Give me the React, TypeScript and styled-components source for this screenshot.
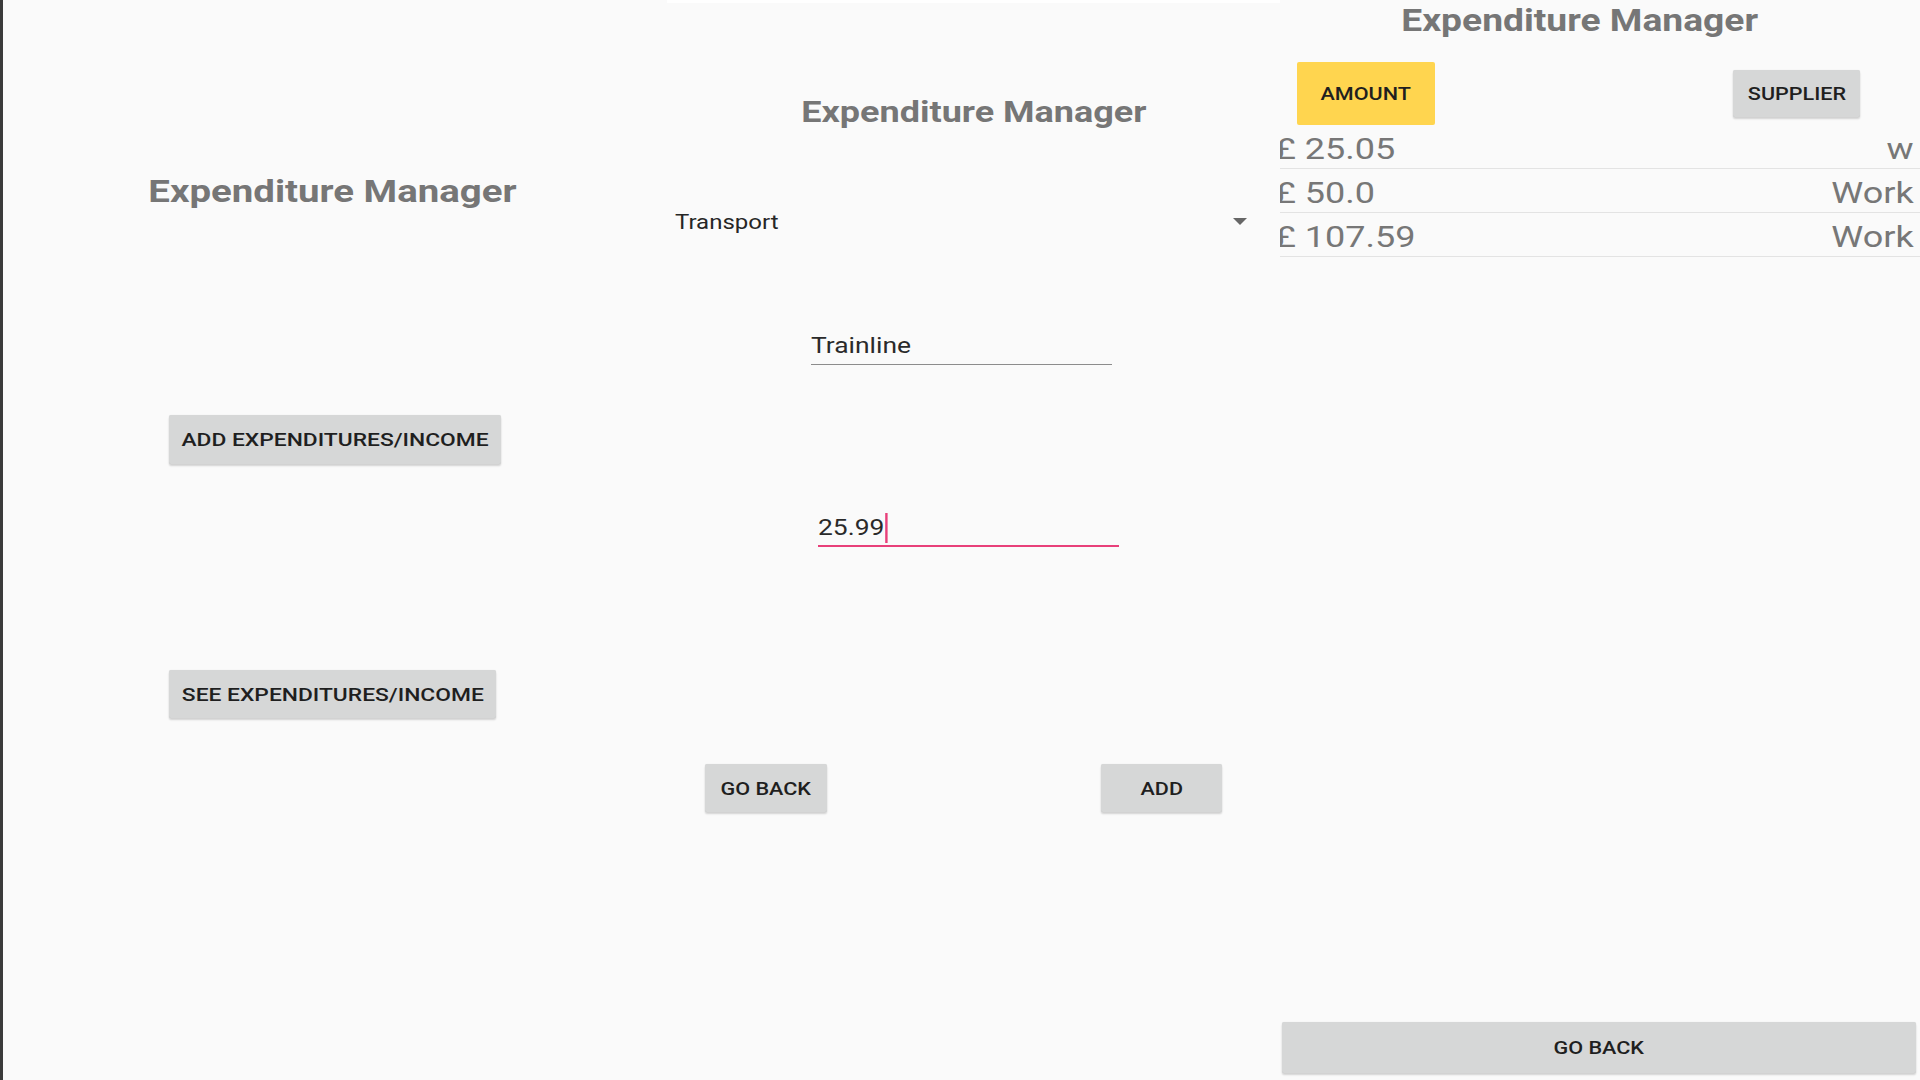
import React from "react";
import styled, { createGlobalStyle } from "styled-components";

const Global = createGlobalStyle`
  html, body { margin: 0; padding: 0; background: #fafafa; }
  body { font-family: Roboto, "Noto Sans", Arial, sans-serif; }
  * { box-sizing: border-box; }
`;

const Screen = styled.div`
  width: 1920px;
  height: 1080px;
  display: flex;
  background: #fafafa;
  border-left: 3px solid #3b3b3b;
  overflow: hidden;
`;

const Wide = styled.span<{ $o?: string; $s?: number }>`
  display: inline-block;
  white-space: nowrap;
  transform: scaleX(${(p) => p.$s ?? 1.2});
  transform-origin: ${(p) => p.$o ?? "center"};
`;

const Title = styled.h1<{ $size: number; $shift?: number }>`
  margin: 0;
  height: 40px;
  line-height: 40px;
  font-size: ${(p) => p.$size}px;
  font-weight: 700;
  color: #767676;
  text-align: center;
  padding-right: ${(p) => p.$shift ?? 0}px;
`;

const RaisedButton = styled.button<{ $w?: number; $h?: number; $accent?: boolean; $fs?: number }>`
  flex: none;
  width: ${(p) => (p.$w ? `${p.$w}px` : "auto")};
  height: ${(p) => p.$h ?? 48}px;
  padding: 0;
  border: none;
  border-radius: 2px;
  background: ${(p) => (p.$accent ? "#ffd54f" : "#d6d7d7")};
  box-shadow: ${(p) =>
    p.$accent ? "none" : "0 2px 2px rgba(0,0,0,0.16), 0 0 1px rgba(0,0,0,0.14)"};
  display: flex;
  align-items: center;
  justify-content: center;
  font-family: Roboto, Arial, sans-serif;
  font-weight: 500;
  font-size: ${(p) => p.$fs ?? 18}px;
  color: #1f1f1f;
  cursor: pointer;
`;

/* ---------- left panel ---------- */
const LeftPanel = styled.section`
  width: 664px;
  flex: none;
  display: flex;
  flex-direction: column;
  align-items: flex-start;
  padding-top: 171px;
`;

const LeftTitleWrap = styled.div`
  align-self: stretch;
  padding-right: 6px;
`;

const MenuButton = styled(RaisedButton)<{ $top: number }>`
  margin-left: 166px;
  margin-top: ${(p) => p.$top}px;
`;

/* ---------- middle panel ---------- */
const MiddlePanel = styled.section`
  width: 613px;
  flex: none;
  display: flex;
  flex-direction: column;
  align-items: flex-start;
  border-top: 3px solid #ffffff;
`;

const MiddleTitleWrap = styled.div`
  align-self: stretch;
  margin-top: 89px;
`;

const Spinner = styled.div`
  margin-top: 70px;
  margin-left: 8px;
  width: 572px;
  height: 40px;
  display: flex;
  align-items: center;
  justify-content: space-between;
  font-size: 20px;
  color: #262626;
`;

const Field = styled.div<{ $left: number; $top: number; $focus?: boolean }>`
  margin-left: ${(p) => p.$left}px;
  margin-top: ${(p) => p.$top}px;
  width: 301px;
  height: 35px;
  line-height: 30px;
  padding-top: 1px;
  font-size: 22px;
  color: #2a2a2a;
  border-bottom: ${(p) => (p.$focus ? "2px solid #e8407a" : "1px solid #8c8c8c")};
`;

const Caret = styled.span`
  display: inline-block;
  width: 2px;
  height: 30px;
  margin-left: 1px;
  vertical-align: top;
  background: #e8407a;
`;

const ActionRow = styled.div`
  margin-top: 217px;
  align-self: stretch;
  display: flex;
  justify-content: space-between;
  padding: 0 58px 0 38px;
`;

/* ---------- right panel ---------- */
const RightPanel = styled.section`
  flex: 1;
  min-width: 0;
  display: flex;
  flex-direction: column;
  overflow: hidden;
`;

const RightTitleWrap = styled.div`
  padding-top: 1px;
`;

const SortBar = styled.div`
  margin-top: 21px;
  height: 63px;
  display: flex;
  align-items: center;
  padding-left: 17px;
  gap: 298px;
`;

const Row = styled.div`
  height: 44px;
  display: flex;
  align-items: center;
  justify-content: space-between;
  padding: 4px 6px 0 0;
  border-bottom: 1px solid #e3e3e3;
  font-size: 30px;
  color: #777777;
`;

const Amount = styled.span`
  margin-left: -5px;
`;

const BottomButton = styled(RaisedButton)`
  margin: auto 4px 7px 2px;
`;

const rows = [
  { amount: "£ 25.05", supplier: "w" },
  { amount: "£ 50.0", supplier: "Work" },
  { amount: "£ 107.59", supplier: "Work" },
];

export default function App() {
  return (
    <>
      <Global />
      <Screen>
        <LeftPanel>
          <LeftTitleWrap>
            <Title $size={32}>
              <Wide>Expenditure Manager</Wide>
            </Title>
          </LeftTitleWrap>
          <MenuButton $top={204} $w={332} $h={49} $fs={19}>
            <Wide>ADD EXPENDITURES/INCOME</Wide>
          </MenuButton>
          <MenuButton $top={206} $w={327} $h={48} $fs={19}>
            <Wide>SEE EXPENDITURES/INCOME</Wide>
          </MenuButton>
        </LeftPanel>

        <MiddlePanel>
          <MiddleTitleWrap>
            <Title $size={30}>
              <Wide>Expenditure Manager</Wide>
            </Title>
          </MiddleTitleWrap>
          <Spinner>
            <Wide $o="left">Transport</Wide>
            <svg width="14" height="8" viewBox="0 0 14 8">
              <polygon points="0,0 14,0 7,7" fill="#666" />
            </svg>
          </Spinner>
          <Field $left={144} $top={88}>
            <Wide $o="left">Trainline</Wide>
          </Field>
          <Field $left={151} $top={147} $focus>
            <Wide $o="left">
              25.99
              <Caret />
            </Wide>
          </Field>
          <ActionRow>
            <RaisedButton $w={122}>
              <Wide>GO BACK</Wide>
            </RaisedButton>
            <RaisedButton $w={121}>
              <Wide>ADD</Wide>
            </RaisedButton>
          </ActionRow>
        </MiddlePanel>

        <RightPanel>
          <RightTitleWrap>
            <Title $size={31} $shift={40}>
              <Wide>Expenditure Manager</Wide>
            </Title>
          </RightTitleWrap>
          <SortBar>
            <RaisedButton $accent $w={138} $h={63}>
              <Wide>AMOUNT</Wide>
            </RaisedButton>
            <RaisedButton $w={127} $h={47}>
              <Wide>SUPPLIER</Wide>
            </RaisedButton>
          </SortBar>
          {rows.map((r) => (
            <Row key={r.amount}>
              <Amount>
                <Wide $o="left">{r.amount}</Wide>
              </Amount>
              <Wide $o="right">{r.supplier}</Wide>
            </Row>
          ))}
          <BottomButton $h={51}>
            <Wide>GO BACK</Wide>
          </BottomButton>
        </RightPanel>
      </Screen>
    </>
  );
}
